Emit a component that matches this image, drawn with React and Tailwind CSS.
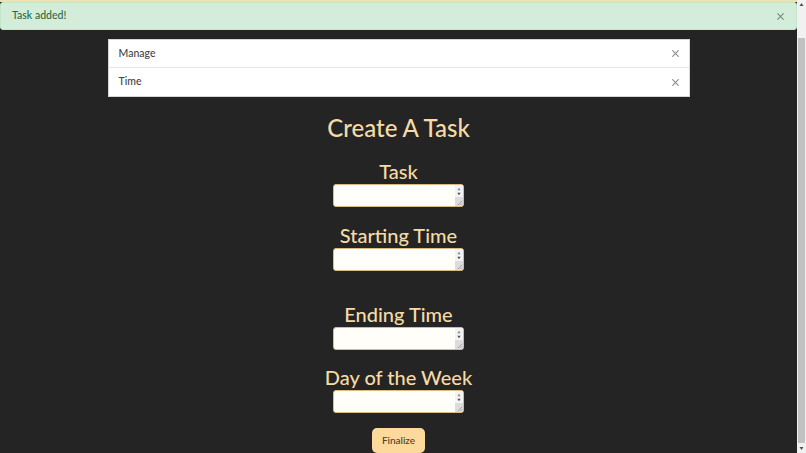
const fields = [
  { label: 'Task', gap: 'mt-[12px]' },
  { label: 'Starting Time', gap: 'mt-[15px]' },
  { label: 'Ending Time', gap: 'mt-[30px]' },
  { label: 'Day of the Week', gap: 'mt-[14px]' },
];

function Close({ className }) {
  return (
    <button className={'flex items-center justify-center leading-none ' + className}>
      <svg width="7" height="7" viewBox="0 0 10 10" fill="none" stroke="currentColor" strokeWidth="1.6" strokeLinecap="round">
        <line x1="1" y1="1" x2="9" y2="9" />
        <line x1="9" y1="1" x2="1" y2="9" />
      </svg>
    </button>
  );
}

function Arrow({ up, size = 5, color = '#505050' }) {
  return (
    <svg width={size} height={size} viewBox="0 0 10 10">
      <polygon points={up ? '5,2 9,8 1,8' : '1,2 9,2 5,8'} fill={color} />
    </svg>
  );
}

// textarea with the little native-looking scrollbar and grip drawn over it
function Box() {
  return (
    <div className="relative h-[23px] w-[131px]">
      <textarea
        rows={1}
        className="block h-full w-full resize-none rounded-[3px] border border-[#d9bc82] bg-[#fffef8] text-[12px] text-[#333] outline-none"
      />
      <div className="absolute top-[1px] right-[1px] bottom-[1px] flex w-[8px] flex-col bg-[#f3f3f3]">
        <div className="flex h-[6px] items-end justify-center">
          <Arrow up size={4} color="#8a8a8a" />
        </div>
        <div className="flex h-[6px] items-center justify-center">
          <Arrow size={4} color="#4a4a4a" />
        </div>
        <div className="flex-1" />
        <div className="flex h-[9px] items-end justify-end bg-[#dcdcdc]">
          <svg width="7" height="7" viewBox="0 0 8 8" stroke="#8a8a8a" strokeWidth="0.8">
            <line x1="7" y1="2" x2="2" y2="7" />
            <line x1="7" y1="5" x2="5" y2="7" />
          </svg>
        </div>
      </div>
    </div>
  );
}

export default function App() {
  return (
    <div className="flex h-[453px] w-full overflow-hidden bg-[#242424] font-['Lato',sans-serif]">
      <div className="flex min-w-0 flex-1 flex-col">
        <div className="h-[2px] bg-[#f2e1b0]" />

        <div className="flex h-[28px] items-center justify-between rounded-[3px] border border-[#c3e6cb] bg-[#d4edda] pl-[11px] pr-[12px]">
          <span className="text-[10.5px] font-medium text-[#2d6a3c]">Task added!</span>
          <Close className="text-[#6f8f77]" />
        </div>

        <div className="mx-auto mt-[9px] w-[582px] border border-[#d6d6d6] bg-white text-[10.5px] font-medium text-[#444]">
          <div className="flex h-[28px] items-center justify-between border-b border-[#e6e6e6] pl-[10px] pr-[10px]">
            <span>Manage</span>
            <Close className="text-[#8a8a8a]" />
          </div>
          <div className="flex h-[28px] items-center justify-between pl-[10px] pr-[10px]">
            <span>Time</span>
            <Close className="text-[#8a8a8a]" />
          </div>
        </div>

        <div className="flex flex-col items-center text-[#f5dba5]">
          <h1 className="mt-[13px] text-[24px] font-medium leading-[36px]">Create A Task</h1>

          {fields.map((f) => (
            <div key={f.label} className={'flex flex-col items-center ' + f.gap}>
              <label className="text-[20px] font-medium leading-[26px]">{f.label}</label>
              <Box />
            </div>
          ))}

          <button className="mt-[15px] h-[25px] rounded-[5px] bg-[#fdd99c] px-[10px] text-[10px] font-medium text-[#4f3f22]">
            Finalize
          </button>
        </div>
      </div>

      {/* page scrollbar, scrolled to the bottom */}
      <div className="flex w-[9px] flex-col bg-[#f1f1f1]">
        <div className="flex h-[9px] items-center justify-center">
          <Arrow up size={5} />
        </div>
        <div className="h-[29px]" />
        <div className="mx-[1px] flex-1 bg-[#c1c1c1]" />
        <div className="flex h-[10px] items-center justify-center">
          <Arrow size={5} />
        </div>
      </div>
    </div>
  );
}
